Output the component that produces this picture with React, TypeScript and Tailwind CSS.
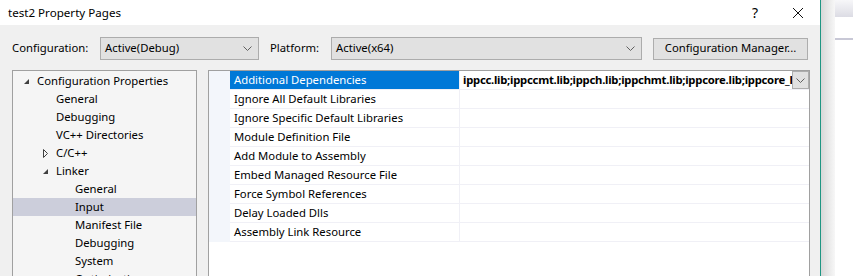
import React from "react"

const font = { fontFamily: '"Segoe UI", "Noto Sans", sans-serif' }

function Expanded() {
  return (
    <svg width="7" height="7" viewBox="0 0 7 7" className="shrink-0">
      <path d="M6 1 L6 6 L1 6 Z" fill="#404040" />
    </svg>
  )
}

function Collapsed() {
  return (
    <svg width="7" height="9" viewBox="0 0 7 9" className="shrink-0">
      <path d="M1.5 0.5 L5.5 4.5 L1.5 8.5 Z" fill="none" stroke="#404040" strokeWidth="1" />
    </svg>
  )
}

function Chevron() {
  return (
    <svg width="9" height="5" viewBox="0 0 9 5">
      <path d="M0.5 0.5 L4.5 4.5 L8.5 0.5" fill="none" stroke="#606060" strokeWidth="1" />
    </svg>
  )
}

const tree = [
  { label: "Configuration Properties", indent: 0, icon: "open" },
  { label: "General", indent: 1 },
  { label: "Debugging", indent: 1 },
  { label: "VC++ Directories", indent: 1 },
  { label: "C/C++", indent: 1, icon: "closed" },
  { label: "Linker", indent: 1, icon: "open" },
  { label: "General", indent: 2 },
  { label: "Input", indent: 2, selected: true },
  { label: "Manifest File", indent: 2 },
  { label: "Debugging", indent: 2 },
  { label: "System", indent: 2 },
  { label: "Optimization", indent: 2 },
]

const props = [
  "Additional Dependencies",
  "Ignore All Default Libraries",
  "Ignore Specific Default Libraries",
  "Module Definition File",
  "Add Module to Assembly",
  "Embed Managed Resource File",
  "Force Symbol References",
  "Delay Loaded Dlls",
  "Assembly Link Resource",
]

export default function App() {
  return (
    <div className="flex w-[853px] h-[276px] overflow-hidden text-[11.3px] text-black" style={font}>
      <div className="w-[821px] shrink-0 flex flex-col border-r border-[#1f9683]">
        <div className="h-[25px] bg-white flex items-center pl-[8px] pr-[16px] text-[11.6px]">
          <span className="flex-1">test2 Property Pages</span>
          <span className="text-[14px] mr-[34px]">?</span>
          <svg width="12" height="12" viewBox="0 0 12 12">
            <path d="M1 1 L11 11 M11 1 L1 11" stroke="#111" strokeWidth="1" />
          </svg>
        </div>
        <div className="flex-1 bg-[#f0f0f0] flex flex-col pt-[12px] pl-[12px] overflow-hidden">
          <div className="flex items-center h-[23px]">
            <span className="w-[88px]">Configuration:</span>
            <div className="w-[159px] h-[23px] border border-[#acacac] bg-[#e1e1e1] flex items-center pl-[4px] pr-[6px]">
              <span className="flex-1">Active(Debug)</span>
              <Chevron />
            </div>
            <span className="ml-[11px] w-[61px]">Platform:</span>
            <div className="w-[311px] h-[23px] border border-[#acacac] bg-[#e1e1e1] flex items-center pl-[4px] pr-[6px]">
              <span className="flex-1">Active(x64)</span>
              <Chevron />
            </div>
            <button className="ml-[11px] w-[155px] h-[22px] border border-[#adadad] bg-[#e1e1e1] flex items-center justify-center">
              Configuration Manager...
            </button>
          </div>
          <div className="flex mt-[10px] flex-1 gap-[11px]">
            <div className="w-[185px] shrink-0 h-[220px] border border-[#a0a0a0] bg-[#f5f5f5] pt-[1px]">
              {tree.map((t, i) => (
                <div
                  key={i}
                  className={"h-[18px] flex items-center " + (t.selected ? "bg-[#cccedb]" : "")}
                  style={{ paddingLeft: 10 + t.indent * 19 }}
                >
                  <span className="w-[14px] flex items-center">
                    {t.icon === "open" && <Expanded />}
                    {t.icon === "closed" && <Collapsed />}
                  </span>
                  <span>{t.label}</span>
                </div>
              ))}
            </div>
            <div className="w-[602px] shrink-0 h-[220px] border border-[#a0a0a0] bg-white flex">
              <div className="w-[21px] shrink-0 bg-[#f3f6fb] h-[171px]"></div>
              <div className="flex-1 min-w-0 flex flex-col">
                {props.map((p, i) => (
                  <div key={i} className="h-[19px] flex border-b border-[#f0f0f6]">
                    <div
                      className={
                        "w-[230px] shrink-0 pl-[4px] flex items-center border-r border-[#f0f0f6] " +
                        (i === 0 ? "bg-[#0078d7] text-white" : "")
                      }
                    >
                      {p}
                    </div>
                    <div className="flex-1 min-w-0 flex items-center overflow-hidden">
                      {i === 0 && (
                        <>
                          <span className="flex-1 min-w-0 overflow-hidden whitespace-nowrap pl-[3px] font-bold tracking-[-0.25px]">
                            ippcc.lib;ippccmt.lib;ippch.lib;ippchmt.lib;ippcore.lib;ippcore_l.lib
                          </span>
                          <span className="w-[17px] shrink-0 h-[18px] border border-[#adadad] bg-[#e1e1e1] flex items-center justify-center">
                            <Chevron />
                          </span>
                        </>
                      )}
                    </div>
                  </div>
                ))}
              </div>
            </div>
          </div>
        </div>
      </div>
      <div className="flex-1 flex">
        <div className="w-[14px] bg-gradient-to-r from-[#d8d8d8] to-[#f7f7f7]"></div>
        <div className="flex-1 bg-[#f7f7f7] flex flex-col">
          <div className="h-[17px] bg-gradient-to-b from-[#f7f7f9] to-[#dcdce4]"></div>
          <div className="h-[21px] bg-white"></div>
          <div className="h-[2px] bg-[#c8c8d6]"></div>
          <div className="flex-1 bg-white"></div>
        </div>
      </div>
    </div>
  )
}
